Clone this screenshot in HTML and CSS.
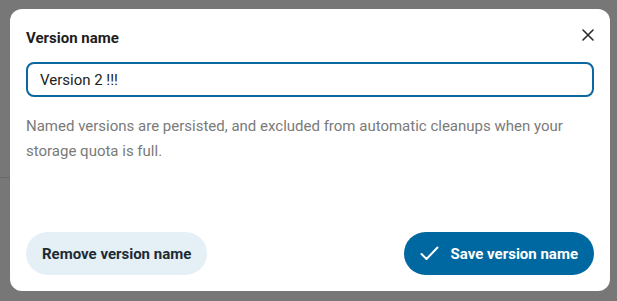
FILE: index.html
```html
<!DOCTYPE html>
<html lang="en">
<head>
    <meta charset="UTF-8">
    <title>Version name</title>
    <link rel="stylesheet" href="styles.css">
</head>
<body>
    <div class="backdrop-line"></div>

    <div class="dialog" role="dialog" aria-labelledby="dialog-title">
        <div class="dialog-header">
            <h2 id="dialog-title" class="dialog-title">Version name</h2>
            <button class="close-btn" aria-label="Close">
                <svg width="12" height="12" viewBox="0 0 12 12">
                    <path d="M1 1 L11 11 M11 1 L1 11" stroke="#2b2b2b" stroke-width="1.6" stroke-linecap="round"/>
                </svg>
            </button>
        </div>

        <input class="name-input" type="text" value="Version 2 !!!">

        <p class="hint">Named versions are persisted, and excluded from automatic cleanups when your storage quota is full.</p>

        <div class="dialog-footer">
            <button class="btn btn-secondary">Remove version name</button>
            <button class="btn btn-primary">
                <svg width="19" height="15" viewBox="0 0 19 15">
                    <path d="M1.5 8 L6.5 13 L17.5 1.5" fill="none" stroke="#fff" stroke-width="2" stroke-linecap="round" stroke-linejoin="round"/>
                </svg>
                Save version name
            </button>
        </div>
    </div>
</body>
</html>
```

FILE: styles.css
```css
body {
    margin: 0;
    height: 100vh;
    box-sizing: border-box;
    padding: 9px 0 0 10px;
    background: #777777;
    font-family: Roboto, 'Noto Sans', sans-serif;
    position: relative;
    overflow: hidden;
}

/* faint line of the page behind the overlay */
.backdrop-line {
    position: absolute;
    left: 0;
    top: 177px;
    width: 10px;
    height: 1px;
    background: #6a6a6a;
}

.dialog {
    width: 600px;
    height: 282px;
    box-sizing: border-box;
    padding: 16px;
    background: #fff;
    border-radius: 12px;
    display: flex;
    flex-direction: column;
}

.dialog-header {
    height: 26px;
    display: flex;
    align-items: center;
    justify-content: space-between;
    margin-bottom: 11px;
}

.dialog-title {
    margin: 0;
    font-size: 15px;
    font-weight: 700;
    color: #1d1d1d;
}

.close-btn {
    width: 24px;
    height: 24px;
    margin: -6px -6px 0 0;
    padding: 0;
    border: none;
    background: none;
    display: flex;
    align-items: center;
    justify-content: center;
    cursor: pointer;
}

.name-input {
    height: 35px;
    box-sizing: border-box;
    border: 2px solid #0b679f;
    border-radius: 8px;
    padding: 0 12px;
    font-family: inherit;
    font-size: 15px;
    color: #222;
    outline: none;
}

.hint {
    margin: 17px 0 0;
    font-size: 15px;
    line-height: 25px;
    color: #7a7a7a;
}

.dialog-footer {
    margin-top: auto;
    display: flex;
    justify-content: space-between;
}

.btn {
    height: 43px;
    border: none;
    border-radius: 22px;
    padding: 0 16px;
    font-family: inherit;
    font-size: 15px;
    font-weight: 700;
    display: flex;
    align-items: center;
    gap: 12px;
    cursor: pointer;
}

.btn-secondary {
    background: #e4f0f5;
    color: #1d2a33;
}

.btn-primary {
    background: #0068a0;
    color: #fff;
}
```
